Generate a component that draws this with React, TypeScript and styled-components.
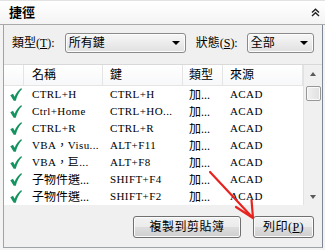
import React from "react";
import styled, { createGlobalStyle } from "styled-components";

const GlobalStyle = createGlobalStyle`
  * { box-sizing: border-box; }
  html, body {
    margin: 0;
    padding: 0;
    background: #f3f3f3;
    overflow: hidden;
  }
`;

const FONT = `"Liberation Serif", "Noto Sans CJK TC", serif`;

const rows = [
  { name: "CTRL+H", key: "CTRL+H" },
  { name: "Ctrl+Home", key: "CTRL+HO..." },
  { name: "CTRL+R", key: "CTRL+R" },
  { name: "VBA，Visu...", key: "ALT+F11" },
  { name: "VBA，巨...", key: "ALT+F8" },
  { name: "子物件選...", key: "SHIFT+F4" },
  { name: "子物件選...", key: "SHIFT+F2" },
];

const Panel = styled.div`
  position: relative;
  width: 325px;
  height: 250px;
  display: flex;
  flex-direction: column;
  background: #f3f3f3;
  font-family: ${FONT};
  color: #000;
`;

const TitleBar = styled.div`
  height: 25px;
  display: flex;
  align-items: center;
  justify-content: space-between;
  padding: 0 5px 0 9px;
  background: linear-gradient(#ffffff, #f4f4f4);
  border-top: 1px solid #e2e2e2;
  border-bottom: 1px solid #a9a9a9;
  font-size: 13px;
  font-weight: bold;
  line-height: 1;
`;

const Body = styled.div`
  flex: 1;
  display: flex;
  flex-direction: column;
  margin: 0 2px 2px 3px;
  background: #f0f0f0;
  border-left: 1px solid #9ea3a8;
  border-right: 1px solid #7d8894;
  border-bottom: 1px solid #9ea3a8;
`;

const FilterRow = styled.div`
  display: flex;
  align-items: center;
  height: 28px;
  padding: 8px 0 0 8px;
  font-size: 12px;
`;

const Label = styled.span<{ $gap: number }>`
  margin-right: ${(p) => p.$gap}px;
  line-height: 20px;
  white-space: nowrap;
  u { text-underline-offset: 1px; }
`;

const Combo = styled.div<{ $width: number; $after?: number }>`
  width: ${(p) => p.$width}px;
  height: 20px;
  margin-right: ${(p) => p.$after ?? 0}px;
  display: flex;
  align-items: center;
  justify-content: space-between;
  padding: 0 5px 0 3px;
  border: 1px solid #8a8a8a;
  border-radius: 3px;
  background: linear-gradient(#f7f7f7, #ececec 50%, #e0e0e0);
  box-shadow: inset 0 0 0 1px #fcfcfc;
  line-height: 1;
`;

const DownTri = styled.span`
  width: 0;
  height: 0;
  border-left: 4px solid transparent;
  border-right: 4px solid transparent;
  border-top: 4px solid #000;
`;

const List = styled.div`
  margin-top: 11px;
  height: 141px;
  display: flex;
  background: #fff;
  border-top: 1px solid #d9d9d9;
  overflow: hidden;
`;

const Table = styled.div`
  width: 299px;
  display: flex;
  flex-direction: column;
  font-size: 11px;
`;

const cols = "20px 79px 80px 40px 80px";

const HeaderRow = styled.div`
  display: grid;
  grid-template-columns: ${cols};
  height: 25px;
  background: linear-gradient(#ffffff, #f7f8f9);
  border-bottom: 1px solid #e5e5e5;
  font-size: 12px;
`;

const HeadCell = styled.div<{ $pad: number }>`
  display: flex;
  align-items: center;
  padding-left: ${(p) => p.$pad}px;
  border-right: 1px solid #e4e4e4;
  line-height: 1;
`;

const Row = styled.div`
  display: grid;
  grid-template-columns: ${cols};
  height: 17px;
  flex: 0 0 17px;
  align-items: center;
  line-height: 1;
`;

const Cell = styled.div<{ $pad: number; $cjk?: boolean }>`
  padding-left: ${(p) => p.$pad}px;
  white-space: nowrap;
  overflow: hidden;
  font-size: ${(p) => (p.$cjk ? 12 : 11)}px;
  letter-spacing: ${(p) => (p.$cjk ? 0 : 0.4)}px;
`;

const CheckCell = styled.div`
  display: flex;
  justify-content: flex-end;
  padding-right: 2px;
`;

const Scrollbar = styled.div`
  flex: 1;
  display: flex;
  flex-direction: column;
  align-items: center;
  background: #f0f0f0;
  border-left: 1px solid #e2e2e2;
`;

const ArrowBox = styled.div`
  height: 17px;
  display: flex;
  align-items: center;
  justify-content: center;
  width: 100%;
`;

const ScrollTri = styled.span<{ $up?: boolean }>`
  width: 0;
  height: 0;
  border-left: 3.5px solid transparent;
  border-right: 3.5px solid transparent;
  ${(p) =>
    p.$up ? "border-bottom: 4px solid #5a5a5a;" : "border-top: 4px solid #5a5a5a;"}
`;

const Thumb = styled.div`
  margin-top: 4px;
  width: 15px;
  height: 15px;
  border: 1px solid #979797;
  border-radius: 2px;
  background: linear-gradient(90deg, #f1f1f1, #e0e0e0);
  box-shadow: inset 0 0 0 1px #fafafa;
`;

const Spacer = styled.div`
  flex: 1;
`;

const Footer = styled.div`
  flex: 1;
  display: flex;
  justify-content: flex-end;
  align-items: flex-start;
  gap: 12px;
  padding: 11px 8px 0 0;
`;

const Button = styled.div<{ $width: number }>`
  width: ${(p) => p.$width}px;
  height: 22px;
  display: flex;
  align-items: center;
  justify-content: center;
  border: 1px solid #707070;
  border-radius: 3px;
  background: linear-gradient(#f2f2f2, #ebebeb 50%, #dddddd 51%, #cfcfcf);
  box-shadow: inset 0 0 0 1px #fbfbfb;
  font-size: 12px;
  line-height: 1;
  letter-spacing: 0.5px;
`;

const Overlay = styled.svg`
  position: absolute;
  left: 0;
  top: 0;
  pointer-events: none;
`;

const Check = () => (
  <svg width="12" height="13" viewBox="0 0 12 13">
    <path
      d="M0.3 7.2 L3 5.8 L4.6 8.8 C6.2 5 8.4 2.2 11.3 0.1 L11.9 1.3 C9.3 3.8 7.1 7.6 5.8 12.7 L3.7 12.7 Z"
      fill="#14935f"
    />
  </svg>
);

const DoubleUp = () => (
  <svg width="9" height="9" viewBox="0 0 9 9">
    <path d="M1 4.5 L4.5 1.3 L8 4.5 M1 8 L4.5 4.8 L8 8" stroke="#222" strokeWidth="1.4" fill="none" />
  </svg>
);

export default function App() {
  return (
    <>
      <GlobalStyle />
      <Panel>
        <TitleBar>
          <span>捷徑</span>
          <DoubleUp />
        </TitleBar>
        <Body>
          <FilterRow>
            <Label $gap={10}>
              類型(<u>T</u>):
            </Label>
            <Combo $width={121} $after={10}>
              <span>所有鍵</span>
              <DownTri />
            </Combo>
            <Label $gap={9}>
              狀態(<u>S</u>):
            </Label>
            <Combo $width={67}>
              <span>全部</span>
              <DownTri />
            </Combo>
          </FilterRow>
          <List>
            <Table>
              <HeaderRow>
                <HeadCell $pad={0} />
                <HeadCell $pad={8}>名稱</HeadCell>
                <HeadCell $pad={7}>鍵</HeadCell>
                <HeadCell $pad={6}>類型</HeadCell>
                <HeadCell $pad={7}>來源</HeadCell>
              </HeaderRow>
              {rows.map((r, i) => (
                <Row key={i}>
                  <CheckCell>
                    <Check />
                  </CheckCell>
                  <Cell $pad={8} $cjk={/[^\x00-\x7f]/.test(r.name) && !r.name.startsWith("VBA")}>
                    {r.name}
                  </Cell>
                  <Cell $pad={7}>{r.key}</Cell>
                  <Cell $pad={6} $cjk>
                    加...
                  </Cell>
                  <Cell $pad={7}>ACAD</Cell>
                </Row>
              ))}
            </Table>
            <Scrollbar>
              <ArrowBox>
                <ScrollTri $up />
              </ArrowBox>
              <Thumb />
              <Spacer />
              <ArrowBox>
                <ScrollTri />
              </ArrowBox>
            </Scrollbar>
          </List>
          <Footer>
            <Button $width={108}>複製到剪貼簿</Button>
            <Button $width={61}>
              列印(<u>P</u>)
            </Button>
          </Footer>
        </Body>
        <Overlay width="325" height="250" viewBox="0 0 325 250">
          <path
            d="M210 172 L252.5 217.5 M236 207 L253 218 L251.5 200"
            stroke="#e8231f"
            strokeWidth="2.2"
            fill="none"
            strokeLinecap="round"
            strokeLinejoin="round"
          />
        </Overlay>
      </Panel>
    </>
  );
}
